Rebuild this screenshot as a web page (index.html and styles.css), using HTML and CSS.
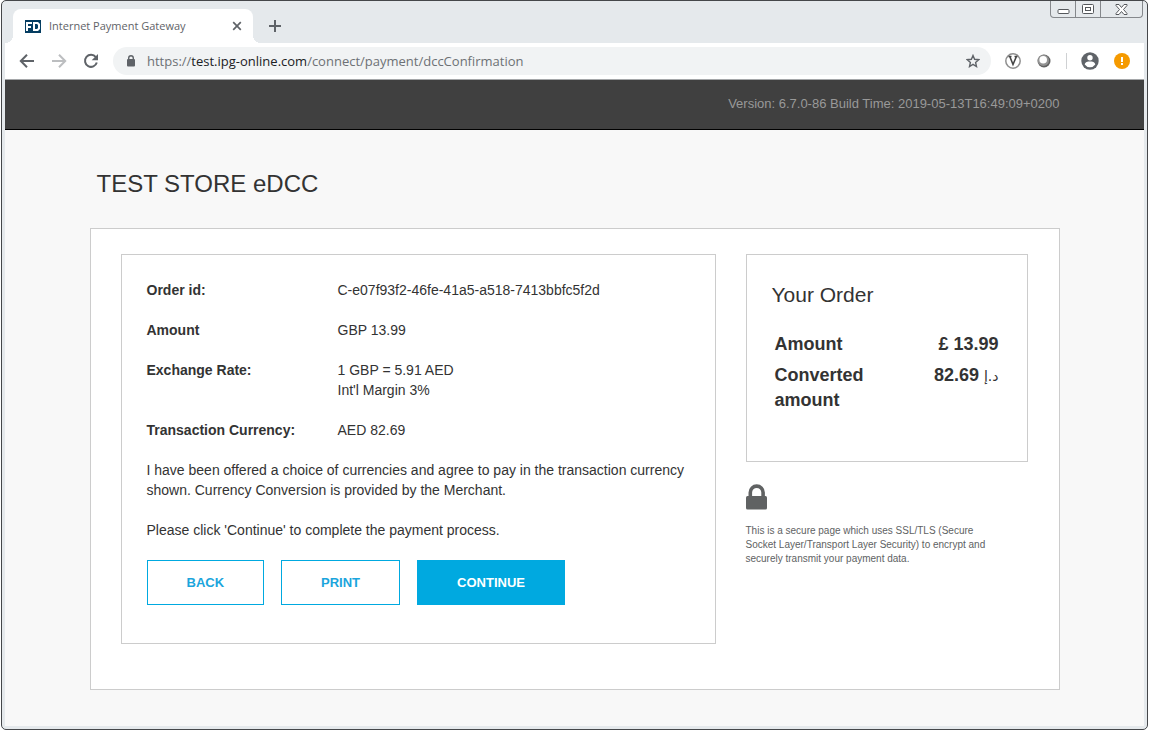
FILE: index.html
```html
<!DOCTYPE html>
<html lang="en">
<head>
<meta charset="utf-8">
<title>Internet Payment Gateway</title>
<link rel="stylesheet" href="styles.css">
</head>
<body>
<div class="window">
  <div class="tabstrip">
    <div class="tab">
      <svg class="favicon" width="16" height="13" viewBox="0 0 16 13" aria-hidden="true"><path fill="#053d61" d="M0 0h16v13H0z"/><path fill="#fff" d="M1 2h6v2H3v2h3v2H3v3H1zM8 2h5l2 2v5l-2 2H8zM10 4v5h2l1-1V5l-1-1z" fill-rule="evenodd"/></svg>
      <span class="tab-title">Internet Payment Gateway</span>
      <button class="icon-button" aria-label="Close tab"><svg width="10" height="10" viewBox="0 0 10 10"><path d="M1.200 1.200l7.600 7.600M8.800 1.200l-7.600 7.600" stroke="#5f6368" stroke-width="1.700"/></svg></button>
    </div>
    <button class="icon-button new-tab" aria-label="New tab"><svg width="12" height="12" viewBox="0 0 12 12"><path d="M6 0v12M0 6h12" stroke="#5f6368" stroke-width="2"/></svg></button>
    <div class="window-controls">
      <button aria-label="Minimize"><svg class="minimize" width="13" height="7" viewBox="0 0 13 7"><rect x="1" y="1.500" width="11" height="4" rx="1" fill="#fff" stroke="#55585c"/></svg></button>
      <button aria-label="Maximize"><svg width="13" height="11" viewBox="0 0 13 11"><rect x=".5" y=".5" width="11" height="9" rx="1" fill="#fff" stroke="#55585c"/><rect x="3.500" y="3.500" width="5" height="3" fill="#fff" stroke="#55585c"/></svg></button>
      <button class="wide" aria-label="Close window"><svg width="13" height="11" viewBox="0 0 13 11"><path d="M1 .5h3l2.500 3 2.500-3h3v1L8.500 5.500l3.500 4v1H9l-2.500-3-2.500 3H1v-1l3.500-4L1 1.500z" fill="#fff" stroke="#55585c"/></svg></button>
    </div>
  </div>
  <div class="toolbar">
    <nav class="nav-buttons" aria-label="History">
      <button class="icon-button" aria-label="Back"><svg width="16" height="16" viewBox="0 0 16 16"><path d="M15 8H2.500M8 1.800L1.800 8 8 14.200" fill="none" stroke="#5f6368" stroke-width="2"/></svg></button>
      <button class="icon-button" aria-label="Forward"><svg width="16" height="16" viewBox="0 0 16 16"><path d="M1 8h12.500M8 1.800L14.200 8 8 14.200" fill="none" stroke="#bcbec0" stroke-width="2"/></svg></button>
      <button class="icon-button" aria-label="Reload"><svg width="16" height="16" viewBox="0 0 16 16"><path d="M12.800 4.200A6 6 0 1 0 13.800 9.500" fill="none" stroke="#5f6368" stroke-width="2"/><path d="M15 1v6.300H8.700z" fill="#5f6368"/></svg></button>
    </nav>
    <div class="omnibox">
      <svg width="8" height="12" viewBox="0 0 8 12" aria-hidden="true"><path fill="none" stroke="#5f6368" stroke-width="1.400" d="M1.700 5V3a2.300 2.300 0 0 1 4.600 0v2"/><rect y="4" width="8" height="7.500" rx="1" fill="#5f6368"/></svg>
      <a class="url" href="#">https://<span class="host">test.ipg-online.com</span>/connect/payment/dccConfirmation</a>
      <button class="icon-button" aria-label="Bookmark this page"><svg width="14" height="14" viewBox="0 0 14 14"><path d="M7 1.500l1.600 3.800 4.100.4-3.100 2.700.9 4.100L7 10.400l-3.500 2.100.9-4.100-3.100-2.700 4.100-.4z" fill="none" stroke="#5f6368" stroke-width="1.400"/></svg></button>
    </div>
    <div class="extensions">
      <button class="icon-button" aria-label="Extension V"><svg width="16" height="16" viewBox="0 0 16 16"><circle cx="8" cy="8" r="7.200" fill="#fff" stroke="#8f8f8f" stroke-width="1.500"/><path d="M3.500 3.500h3M9.500 3.500h3M5 4l3 7.500L11.200 4" fill="none" stroke="#444" stroke-width="1.600"/></svg></button>
      <button class="icon-button" aria-label="Extension"><svg width="16" height="16" viewBox="0 0 16 16"><circle cx="8" cy="8" r="6.500" fill="#626262"/><circle cx="7.400" cy="7.400" r="5.600" fill="#939393"/><circle cx="7.200" cy="6.800" r="3.800" fill="#fff"/></svg></button>
      <span class="divider"></span>
      <button class="icon-button" aria-label="Profile"><svg width="18" height="18" viewBox="0 0 18 18"><circle cx="9" cy="9" r="8.700" fill="#5f6368"/><circle cx="9" cy="5.700" r="2.700" fill="#fff"/><path d="M3.700 12.500c.3-2.500 3-3 5.300-3s5 .5 5.300 3A6.500 6.500 0 0 1 9 15.200a6.500 6.500 0 0 1-5.300-2.700z" fill="#fff"/></svg></button>
      <button class="icon-button" aria-label="Update available"><svg width="16" height="16" viewBox="0 0 16 16"><circle cx="8" cy="8" r="8" fill="#f59a00"/><path d="M7 4h2v5H7zM7 10h2v2H7z" fill="#fff"/></svg></button>
    </div>
  </div>
  <div class="page">
    <header class="banner"><p class="container version">Version: 6.7.0-86 Build Time: 2019-05-13T16:49:09+0200</p></header>
    <main class="container">
      <h1 class="store">TEST STORE eDCC</h1>
      <div class="panel">
        <section class="box details">
          <dl class="facts">
            <dt>Order id:</dt><dd>C-e07f93f2-46fe-41a5-a518-7413bbfc5f2d</dd>
            <dt>Amount</dt><dd>GBP 13.99</dd>
            <dt>Exchange Rate:</dt><dd>1 GBP = 5.91 AED<br>Int'l Margin 3%</dd>
            <dt>Transaction Currency:</dt><dd>AED 82.69</dd>
          </dl>
          <p>I have been offered a choice of currencies and agree to pay in the transaction currency shown. Currency Conversion is provided by the Merchant.</p>
          <p>Please click 'Continue' to complete the payment process.</p>
          <div class="actions">
            <button class="button">BACK</button>
            <button class="button">PRINT</button>
            <button class="button primary">CONTINUE</button>
          </div>
        </section>
        <aside>
          <section class="box order">
            <h2>Your Order</h2>
            <table>
              <tr><th scope="row">Amount</th><td>£ 13.99</td></tr>
              <tr><th scope="row">Converted amount</th><td>82.69 <span class="dirham" dir="rtl" lang="ar">د.إ</span></td></tr>
            </table>
          </section>
          <svg class="lock" width="22" height="26" viewBox="0 0 22 26" aria-hidden="true"><path d="M4.300 12V8.500a6.400 6.400 0 0 1 12.800 0V12" fill="none" stroke="#606263" stroke-width="3.600"/><rect y="12" width="21" height="13.500" rx="1.500" fill="#606263"/></svg>
          <p class="secure">This is a secure page which uses SSL/TLS (Secure Socket Layer/Transport Layer Security) to encrypt and securely transmit your payment data.</p>
        </aside>
      </div>
    </main>
  </div>
</div>
</body>
</html>
```
FILE: styles.css
```css
* { box-sizing: border-box; }
body {
  margin: 0;
  padding: 0 2px 1px 1px;
  min-height: 100vh;
  display: flex;
  background: #fff;
  color: #333;
  font: 14px/20px "Liberation Sans", Arial, sans-serif;
}
h1, h2, p, dl, dd { margin: 0; }
button { font: inherit; cursor: pointer; }
svg { display: block; flex: none; }

.window {
  flex: 1;
  min-width: 0;
  display: flex;
  flex-direction: column;
  padding: 0 3px 3px;
  border: 1px solid #45474a;
  border-radius: 5px;
  background: #e5e9ec;
}
.icon-button {
  display: flex;
  padding: 0;
  border: 0;
  background: none;
}

.tabstrip {
  display: flex;
  align-items: flex-end;
  height: 42px;
  padding-left: 8px;
  font: 11px/16px "Open Sans", "Noto Sans", sans-serif;
}
.tab {
  position: relative;
  display: flex;
  align-items: center;
  gap: 8px;
  width: 240px;
  height: 34px;
  padding: 0 11px 0 12px;
  border-radius: 8px 8px 0 0;
  background: #fff;
  color: #5f6368;
}
.tab::before, .tab::after {
  content: "";
  position: absolute;
  bottom: 0;
  width: 8px;
  height: 8px;
}
.tab::before { right: 100%; background: radial-gradient(circle at 0 0, transparent 8px, #fff 8px); }
.tab::after { left: 100%; background: radial-gradient(circle at 100% 0, transparent 8px, #fff 8px); }
.tab-title { flex: 1; white-space: nowrap; }
.new-tab { margin: 0 0 11px 16px; }
.window-controls {
  display: flex;
  align-self: flex-start;
  margin-left: auto;
  margin-right: 1px;
  border: 1px solid #85888c;
  border-top: 0;
  border-radius: 0 0 4px 4px;
}
.window-controls button {
  display: flex;
  align-items: center;
  justify-content: center;
  width: 25px;
  height: 16px;
  padding: 0;
  border: 0;
  border-right: 1px solid #85888c;
  background: none;
}
.window-controls .wide { width: 41px; border-right: 0; }
.minimize { margin-top: 4px; }

.toolbar {
  display: flex;
  align-items: center;
  height: 37px;
  padding: 0 14px;
  border-bottom: 1px solid #a5a7a9;
  background: #fff;
}
.nav-buttons { display: flex; gap: 16px; margin-right: 14px; }
.omnibox {
  flex: 1;
  min-width: 0;
  display: flex;
  align-items: center;
  height: 28px;
  padding: 0 11px 0 14px;
  border-radius: 14px;
  background: #f1f3f4;
  font: 13px/20px "Open Sans", "Noto Sans", sans-serif;
}
.url { flex: 1; margin-left: 12px; color: #6d7175; text-decoration: none; white-space: nowrap; overflow: hidden; }
.host { color: #202124; }
.extensions { display: flex; align-items: center; gap: 15px; margin-left: 14px; }
.divider { width: 1px; height: 16px; margin: 0 -1px; background: #cfd1d3; }

.page { flex: 1; background: #f8f8f8; }
.container { width: 100%; max-width: 970px; margin: 0 auto; }
.banner { height: 50px; border-bottom: 1px solid #000; background: #404040; }
.version { padding-top: 14px; color: #999; font-size: 13px; text-align: right; }
.store { padding: 40px 7px 30px; font-size: 24px; line-height: 28px; font-weight: 400; }
.panel {
  display: grid;
  grid-template-columns: 595fr 282fr;
  gap: 30px;
  padding: 25px 31px 45px 30px;
  border: 1px solid #ccc;
  background: #fff;
}
.box { border: 1px solid #ccc; }
.details { padding: 25px 25px 38px; }
.facts { display: grid; grid-template-columns: 191px 1fr; row-gap: 20px; }
.facts dt { font-weight: 700; }
.details p { margin-top: 20px; }
.actions { display: flex; gap: 17px; margin-top: 20px; }
.button {
  height: 45px;
  padding: 0 39px;
  border: 1px solid #00a9e0;
  background: #fff;
  color: #1ba5dc;
  font-size: 13px;
  font-weight: 700;
}
.button.primary { background: #00a9e0; color: #fff; }

.order { min-height: 208px; padding: 28px 25px; }
.order h2 { font-size: 21px; line-height: 24px; font-weight: 400; }
.order table { width: 100%; margin-top: 22px; border-collapse: collapse; font-size: 18px; line-height: 25px; }
.order th, .order td { padding: 3px; font-weight: 700; vertical-align: top; }
.order th { width: 130px; text-align: left; }
.order td { text-align: right; white-space: nowrap; }
.dirham { font: 14px/20px "DejaVu Sans", sans-serif; }
.lock { margin-top: 22px; }
.secure { max-width: 250px; margin-top: 14px; color: #606263; font-size: 10px; line-height: 14px; }
```
